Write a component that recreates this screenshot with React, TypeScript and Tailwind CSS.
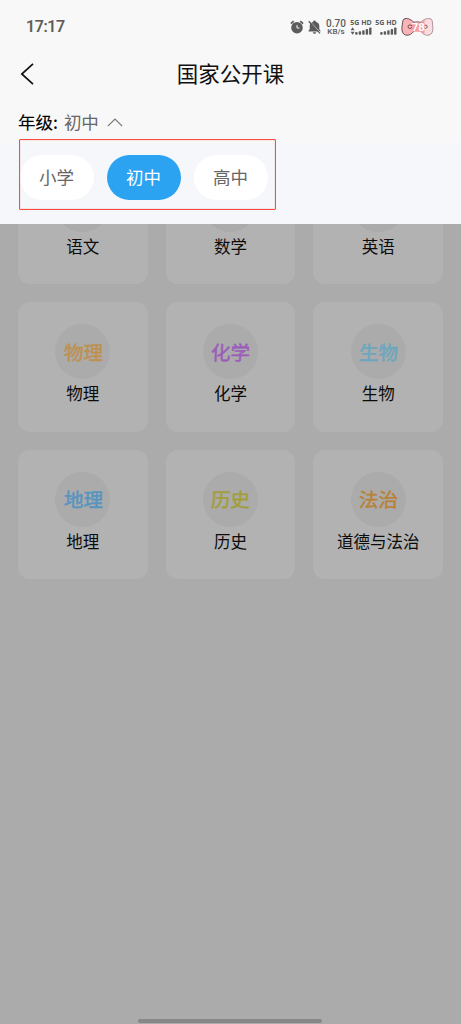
import React, { useState } from 'react';

interface Subject {
  name: string;
  short?: string;
  color?: string;
}

const grades = ['小学', '初中', '高中'];

const subjects: Subject[] = [
  { name: '语文' },
  { name: '数学' },
  { name: '英语' },
  { name: '物理', short: '物理', color: 'text-[#be9150]' },
  { name: '化学', short: '化学', color: 'text-[#9b5dba]' },
  { name: '生物', short: '生物', color: 'text-[#6ca6bf]' },
  { name: '地理', short: '地理', color: 'text-[#5794bf]' },
  { name: '历史', short: '历史', color: 'text-[#a39e3d]' },
  { name: '道德与法治', short: '法治', color: 'text-[#b98238]' },
];

const AlarmIcon = () => (
  <svg width="14" height="14" viewBox="0 0 14 14" fill="none">
    <circle cx="7" cy="7.7" r="5.8" fill="#5c5c5c" />
    <path d="M.9 3.7 3.7 1.2M13.1 3.7 10.3 1.2" stroke="#5c5c5c" strokeWidth="1.8" />
    <path d="M7 5v3h2.4" stroke="#f8f8f8" strokeWidth="1" />
  </svg>
);

const MutedBellIcon = () => (
  <svg width="13" height="14" viewBox="0 0 13 14" fill="none">
    <path d="M6.5.5c.7 0 1.3.5 1.3 1.2 2.2.6 3.5 2.2 3.5 4.3v3.2l1.2 1.5v.9H.5v-.9l1.2-1.5V6c0-2.1 1.3-3.7 3.5-4.3C5.2 1 5.8.5 6.5.5ZM4.8 12.2h3.4c0 .9-.7 1.5-1.7 1.5s-1.7-.6-1.7-1.5Z" fill="#5c5c5c" />
    <path d="m1.8 1.3 10.5 11.2" stroke="#f8f8f8" strokeWidth=".8" />
    <path d="m.7 1.3 11.3 12.1" stroke="#5c5c5c" strokeWidth="1.3" />
  </svg>
);

const Signal = ({ data = false }: { data?: boolean }) => (
  <div className="flex w-[22px] flex-col items-center">
    <span className="font-['Open_Sans'] text-[7px] leading-[8px] font-bold whitespace-nowrap">5G HD</span>
    <svg width="22" height="8" viewBox="0 0 22 8" fill="#5c5c5c">
      {data && <path d="M2.6.3 4.6 3.3h-4ZM2.6 7.7.6 4.7h4Z" />}
      <rect x="5.2" y="5" width="2.4" height="2.8" rx=".8" />
      <rect x="8.7" y="4.3" width="2.4" height="3.5" rx=".8" />
      <rect x="12.2" y="3.3" width="2.4" height="4.5" rx=".8" />
      <rect x="15.7" y="2" width="2.4" height="5.8" rx=".8" />
      <rect x="19.1" y=".5" width="2.4" height="7.3" rx=".8" />
    </svg>
  </div>
);

const BowBattery = () => (
  <svg width="33" height="20" viewBox="0 0 33 20">
    <path d="M13 5.5C9.500 1.800 5.500.7 3 2 .9 4 2 6 1 9.500.5 14 1.500 17 4.500 18c3.500.8 6.500-1 8.500-4.200Z" fill="#f8b4b6" stroke="#574044" strokeWidth=".9" />
    <path d="M19.500 5.500c3.500-3.700 8-4.800 10.500-3.500 2.200 2 1 4 1.800 7.500.5 4.500-.6 7.500-3.600 8.500-3.700.8-6.700-1-8.700-4.200Z" fill="#fadde0" stroke="#a3888c" strokeWidth=".9" />
    <path d="M19 6.200c1.500-1.500 3-2.500 4.500-3.200v14c-1.600-.7-3-1.700-4.500-3.200Z" fill="#f59a9e" />
    <rect x="10.500" y="5.200" width="11" height="9.500" rx="3" fill="#f59a9e" />
    <path d="M12 5.400c2-.8 6-.8 8 0" fill="none" stroke="#765459" strokeWidth=".8" />
    <path d="M11 8.800C8.500 7 6.300 8.500 7.300 10.600c1 1.500 2.700.8 3.700-.3M23.500 8.300c2-.8 3.200.6 2.400 2.300-.6 1-1.600.9-2.400.3" fill="none" stroke="#5b3c42" strokeWidth=".9" />
    <text x="17.300" y="14" textAnchor="middle" fontFamily="Roboto, sans-serif" fontSize="11.500" fontWeight="700" fill="#fff">78</text>
  </svg>
);

const StatusBar = () => (
  <div className="flex h-[54px] items-center pr-[27px] pl-[26px] text-[#5c5c5c]">
    <span className="font-[Roboto,sans-serif] text-[16px] leading-5 font-medium tracking-[-0.4px] [-webkit-text-stroke:0.2px_currentColor]">17:17</span>
    <div className="ml-auto flex items-center">
      <AlarmIcon />
      <div className="ml-1"><MutedBellIcon /></div>
      <div className="ml-1 flex w-[22px] flex-col items-center font-[Roboto,sans-serif] font-medium">
        <span className="text-[10px] leading-[9px] tracking-[0.1px]">0.70</span>
        <span className="text-[8px] leading-[8px]">KB/s</span>
      </div>
      <div className="ml-[3px]"><Signal data /></div>
      <div className="ml-[3px]"><Signal /></div>
      <div className="ml-1"><BowBattery /></div>
    </div>
  </div>
);

const SubjectCard = ({ subject }: { subject: Subject }) => (
  <div className="flex h-[129.3px] flex-col items-center rounded-xl bg-[#b2b2b2] pt-[22px]">
    <div className="flex h-[55px] w-[55px] shrink-0 items-center justify-center rounded-full bg-[#ababab]">
      {subject.short && (
        <span className={`-skew-x-2 pl-px text-[19.5px] leading-none whitespace-nowrap [-webkit-text-stroke:0.5px_currentColor] ${subject.color}`}>
          {subject.short}
        </span>
      )}
    </div>
    <span className="mt-[2px] text-[16.5px] leading-6 text-[#0c0c0c]">{subject.name}</span>
  </div>
);

export default function App() {
  const [grade, setGrade] = useState('初中');
  const [open, setOpen] = useState(true);

  return (
    <div className="flex h-screen flex-col overflow-hidden bg-[#ababab] font-['Noto_Sans_CJK_SC',sans-serif]">
      <header className="h-[224px] shrink-0 bg-[#f8f8f8]">
        <StatusBar />
        <div className="grid h-10 grid-cols-[54px_1fr_54px] items-center">
          <button className="pl-5" aria-label="返回">
            <svg width="14" height="22" viewBox="0 0 14 22" fill="none" stroke="#111" strokeWidth="1.7">
              <path d="M13 .8 1.8 11 13 21.2" />
            </svg>
          </button>
          <h1 className="-mt-0.5 text-center text-[21.5px] leading-8 text-[#111]">国家公开课</h1>
        </div>
        <button className="flex h-[49px] items-center pt-[8px] pl-[18px] text-[17.5px]" onClick={() => setOpen(!open)}>
          <span className="text-black [-webkit-text-stroke:0.1px_currentColor]">年级:</span>
          <span className="ml-[6px] text-[#666]">{grade}</span>
          <svg className="ml-[8px]" width="16" height="9" viewBox="0 0 16 9" fill="none" stroke="#777" strokeWidth="1.2">
            <path d="M.8 8.2 8 1l7.2 7.2" />
          </svg>
        </button>
        {open && (
          <div className="relative flex h-[81px] gap-[13px] bg-[#f5f7fa] pt-3 pl-5">
            {grades.map((g) => (
              <button
                key={g}
                onClick={() => setGrade(g)}
                className={`h-[45px] w-[74px] rounded-full pr-px text-[17.5px] ${g === grade ? 'bg-[#2ba3f1] text-white' : 'bg-white text-[#666]'}`}
              >
                {g}
              </button>
            ))}
            <div className="pointer-events-none absolute -top-1 left-[19px] h-[71px] w-[257px] rounded-[1px] border border-solid border-[#ff4a40] shadow-[inset_0_0_1px_#ff4a40]" />
          </div>
        )}
      </header>

      <main className="min-h-0 flex-1 overflow-hidden">
        <div className="-mt-[69px] grid grid-cols-3 gap-[18px] px-[18px]">
          {subjects.map((subject) => (
            <SubjectCard key={subject.name} subject={subject} />
          ))}
        </div>
      </main>

      <div className="mr-auto mb-[1px] ml-[138px] h-1 w-[184px] shrink-0 rounded-full bg-[#878787]" />
    </div>
  );
}
